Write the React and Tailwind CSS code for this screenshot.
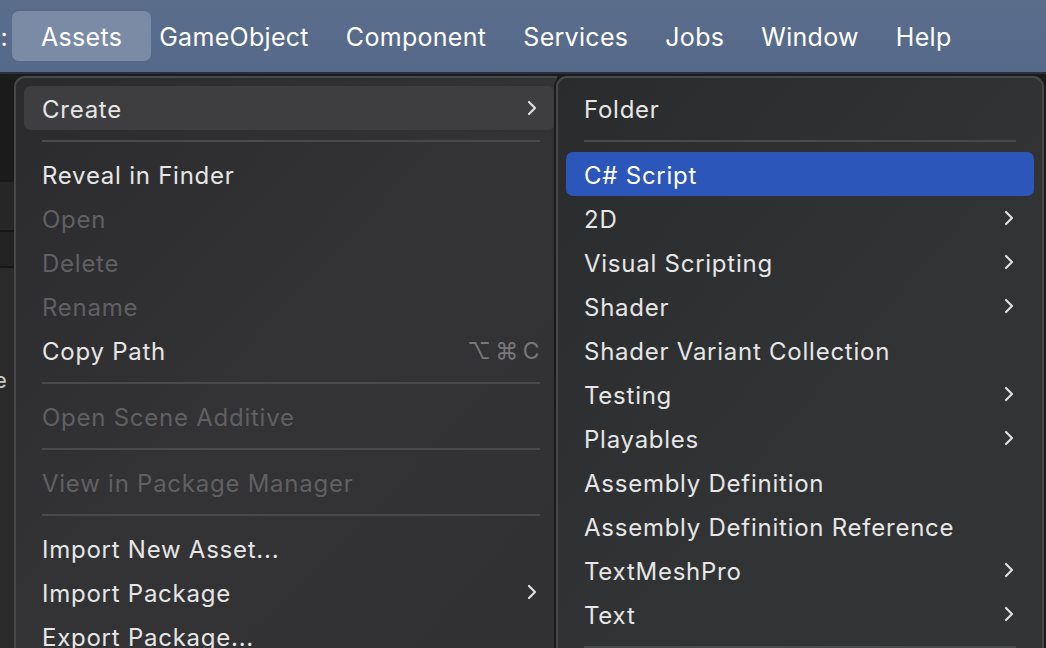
import React from 'react';

const font = { fontFamily: 'Inter, "Noto Sans", "DejaVu Sans", sans-serif' };

function Chevron() {
    return (
        <svg width="10" height="16" viewBox="0 0 10 16" className="shrink-0">
            <path d="M2 2 L8 8 L2 14" fill="none" stroke="#dedede" strokeWidth="2.2" strokeLinecap="round" strokeLinejoin="round" />
        </svg>
    );
}

function Row({ label, disabled, active, hover, sub, shortcut, pr = 'pr-[20px]' }) {
    let bg = '';
    if (active) bg = 'bg-[#2c56b9] text-white';
    else if (hover) bg = 'bg-[#3e3e40]';
    return (
        <div className={`h-[44px] rounded-[7px] pl-[18px] ${pr} flex items-center justify-between ${bg}`}>
            <span className={`text-[24px] leading-none tracking-[0.75px] translate-y-[1.5px] ${disabled ? 'text-[#606062]' : 'text-[#e6e6e6]'} ${active ? 'text-white' : ''}`}>
                {label}
            </span>
            {sub && <Chevron />}
            {shortcut && <span className="text-[23px] text-[#78787a] tracking-[4.5px] -mr-[4px] translate-y-[1px]">{shortcut}</span>}
        </div>
    );
}

function Sep({ inset = 'mx-[18px]' }) {
    return (
        <div className="h-[22px] flex items-center">
            <div className={`h-[2px] flex-1 bg-[#4a4a4c] ${inset}`} />
        </div>
    );
}

export default function App() {
    const topItems = ['GameObject', 'Component', 'Services', 'Jobs', 'Window', 'Help'];

    return (
        <div className="w-[1046px] h-[648px] overflow-hidden bg-[#1c1c1c] flex flex-col" style={font}>
            {/* Menu bar */}
            <div className="h-[74px] shrink-0 bg-gradient-to-b from-[#5a6d8b] to-[#57698a] border-b-2 border-[#2a2f38] flex items-center text-white text-[25px] tracking-[0.3px]">
                <span className="w-[12px] overflow-hidden text-right -ml-[4px] mr-[4px] translate-y-[2px]">:</span>
                <div className="h-[50px] px-[29px] pt-[3px] rounded-[7px] bg-[#7b8ba6] flex items-center">Assets</div>
                <div className="flex items-center gap-[37px] ml-[8px] pt-[3px]">
                    {topItems.map(t => (
                        <span key={t}>{t}</span>
                    ))}
                </div>
            </div>

            <div className="flex flex-1 min-h-0">
                {/* editor strip behind menu */}
                <div className="w-[14px] shrink-0 flex flex-col">
                    <div className="h-[108px] bg-[#1b1b1b]" />
                    <div className="h-[50px] bg-[#262626] border-b-2 border-[#171717]" />
                    <div className="h-[36px] bg-[#232323] border-b-2 border-[#171717]" />
                    <div className="flex-1 bg-[#2a2a2a] text-[#c8c8c8] text-[22px] pt-[96px] -indent-[6px] overflow-hidden">e</div>
                </div>

                {/* Assets menu */}
                <div className="w-[543px] shrink-0 mt-[2px] rounded-tl-[11px] border-l-2 border-t-2 border-[#48484a] bg-gradient-to-br from-[#2b2b2d] via-[#333335] to-[#313133] pl-[8px] pr-[2px] pt-[8px] overflow-hidden">
                    <Row label="Create" hover sub pr="pr-[18px]" />
                    <Sep inset="ml-[18px] mr-[15px]" />
                    <Row label="Reveal in Finder" />
                    <Row label="Open" disabled />
                    <Row label="Delete" disabled />
                    <Row label="Rename" disabled />
                    <Row label="Copy Path" shortcut="⌥⌘C" pr="pr-[15px]" />
                    <Sep inset="ml-[18px] mr-[15px]" />
                    <Row label="Open Scene Additive" disabled />
                    <Sep inset="ml-[18px] mr-[15px]" />
                    <Row label="View in Package Manager" disabled />
                    <Sep inset="ml-[18px] mr-[15px]" />
                    <Row label="Import New Asset..." />
                    <Row label="Import Package" sub pr="pr-[18px]" />
                    <Row label="Export Package..." />
                </div>

                {/* Create submenu */}
                <div className="w-[488px] shrink-0 -ml-[1px] mt-[2px] rounded-t-[11px] border-x-2 border-t-2 border-[#48484a] bg-gradient-to-br from-[#2a2b2d] via-[#313234] to-[#333436] px-[8px] pt-[8px] overflow-hidden shadow-[-2px_0_0_#1a1a1a]">
                    <Row label="Folder" />
                    <Sep inset="ml-[18px] mr-[18px]" />
                    <Row label="C# Script" active />
                    <Row label="2D" sub />
                    <Row label="Visual Scripting" sub />
                    <Row label="Shader" sub />
                    <Row label="Shader Variant Collection" />
                    <Row label="Testing" sub />
                    <Row label="Playables" sub />
                    <Row label="Assembly Definition" />
                    <Row label="Assembly Definition Reference" />
                    <Row label="TextMeshPro" sub />
                    <Row label="Text" sub />
                    <Sep inset="ml-[18px] mr-[18px]" />
                </div>

                <div className="flex-1 bg-[#1c1c1c]" />
            </div>
        </div>
    );
}
